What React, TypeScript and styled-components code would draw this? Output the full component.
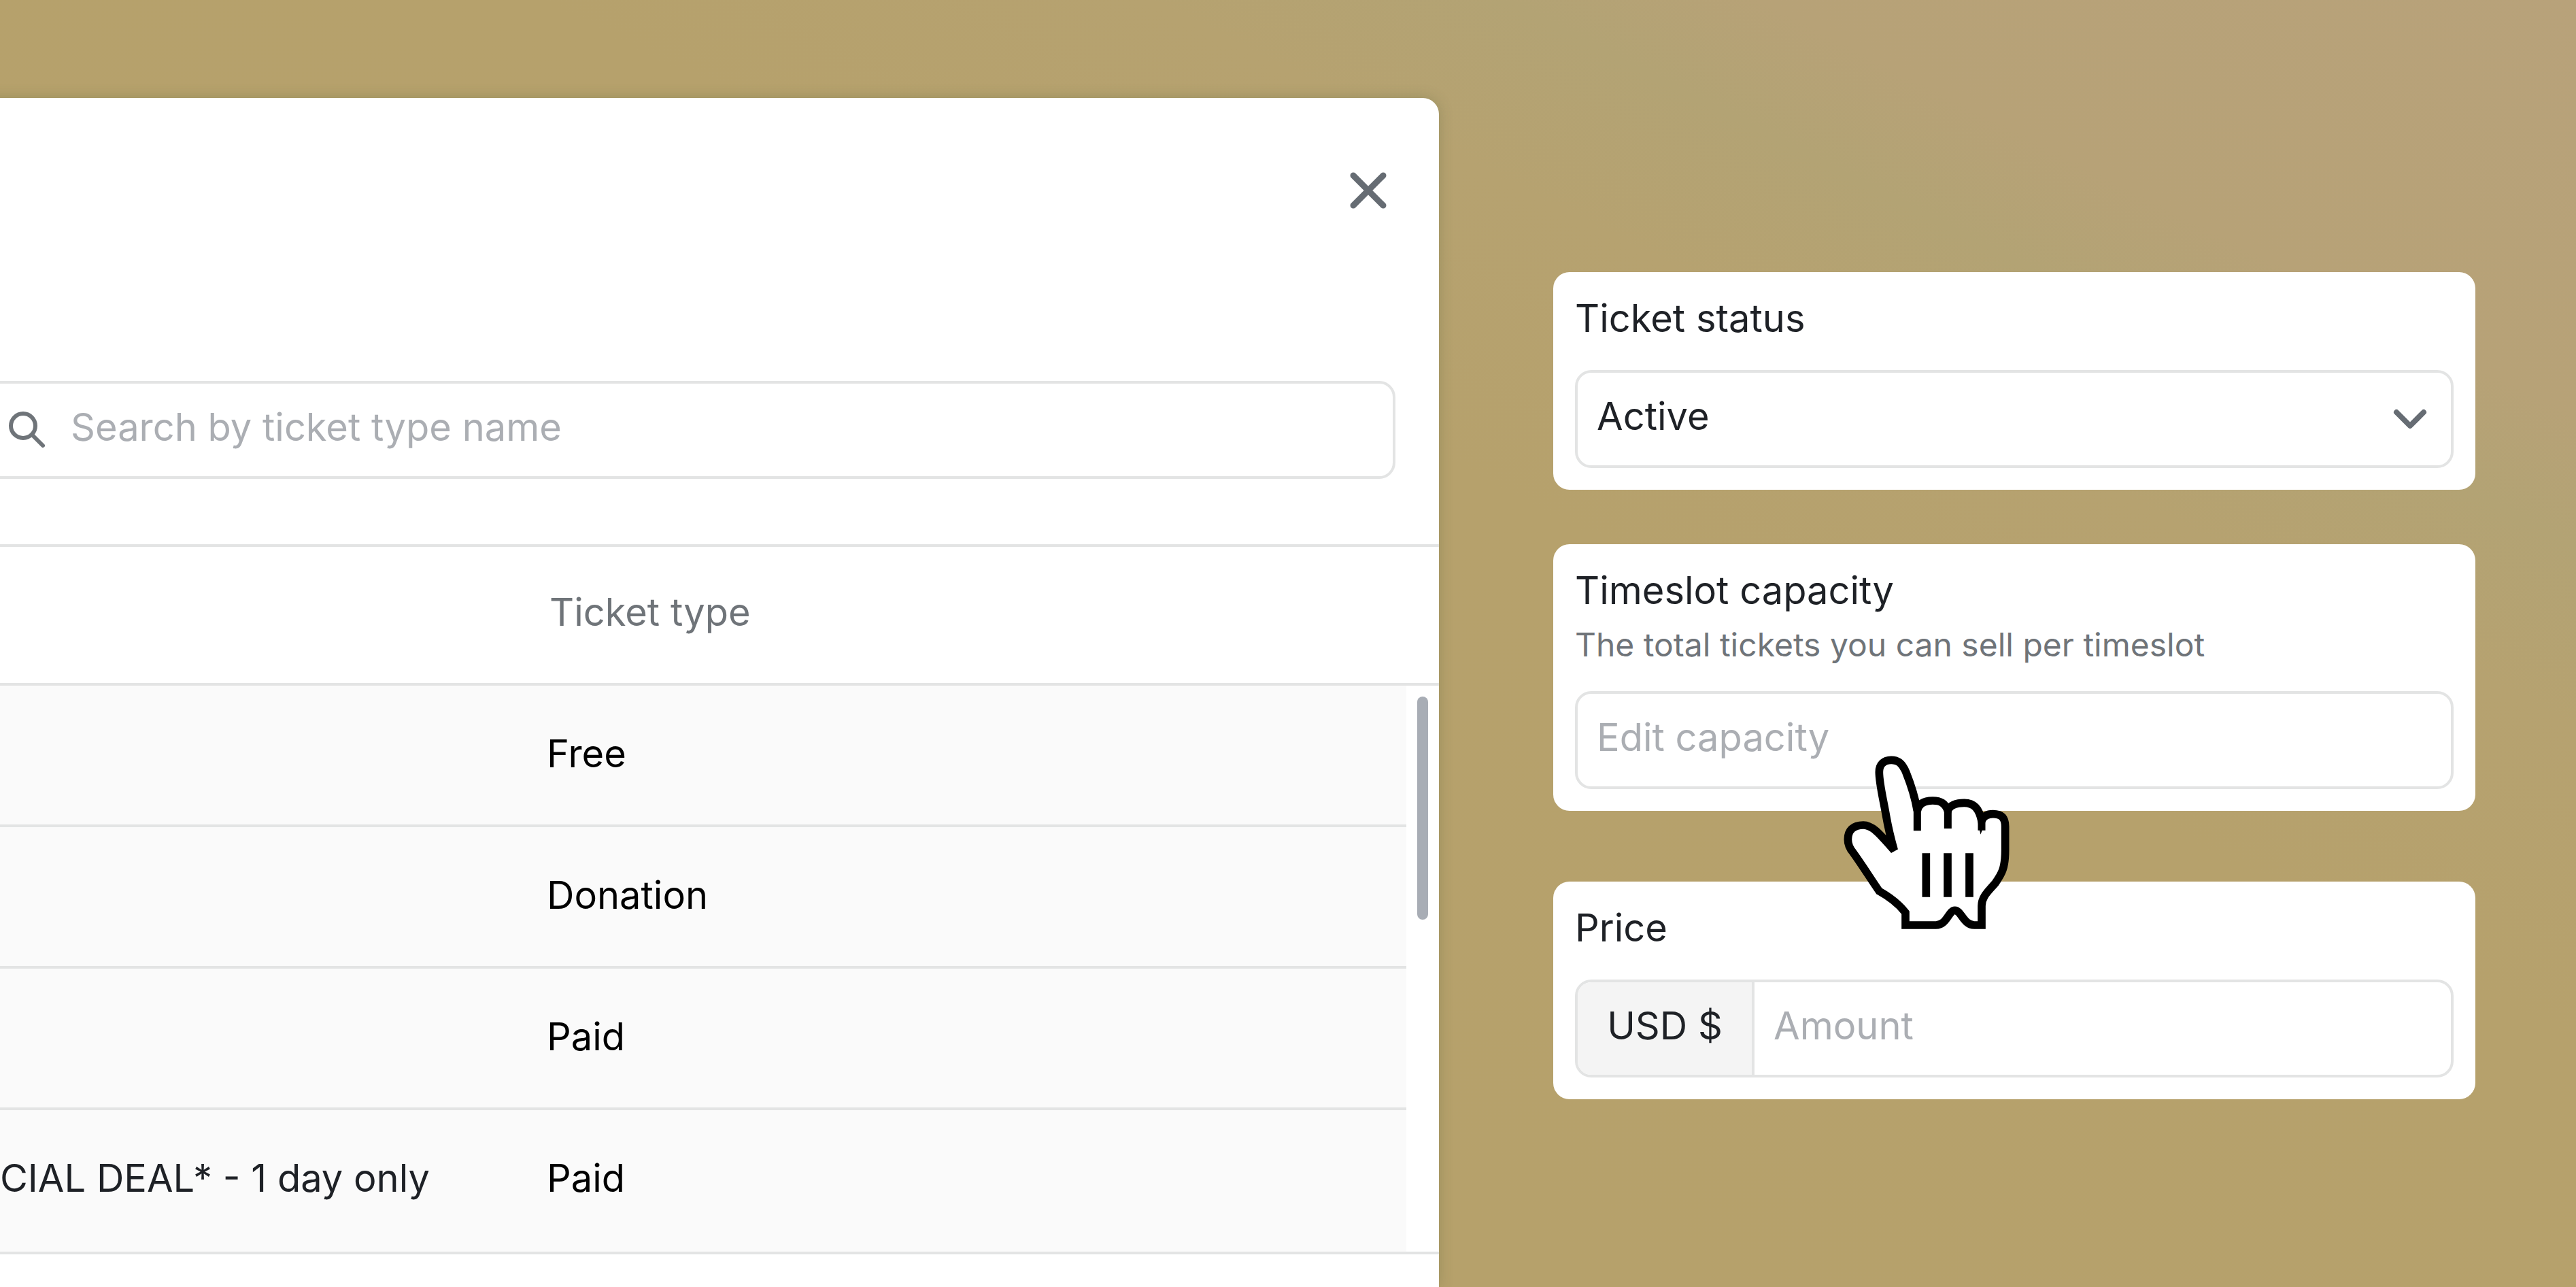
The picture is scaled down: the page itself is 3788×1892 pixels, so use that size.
import React from "react";
import styled, { createGlobalStyle } from "styled-components";

const ink = "#1e2126";
const muted = "#6f7479";
const faint = "#abaeb3";
const line = "#e3e4e4";

const GlobalStyle = createGlobalStyle`
  *, *::before, *::after { box-sizing: border-box; }
  body { margin: 0; }
  body, input, select, button {
    font-family: Inter, "Liberation Sans", sans-serif;
    font-size: 56px;
    line-height: 72px;
    font-weight: 400;
    color: ${ink};
  }
`;

const Page = styled.main`
  min-height: 100vh;
  display: grid;
  grid-template-columns: minmax(0, 529fr) minmax(0, 339fr);
  column-gap: 168px;
  padding-right: 148px;
  overflow: hidden;
  background: linear-gradient(27deg, #b6a16a 0%, #b6a16c 60%, #b6a270 72%, #b3a374 79%, #b7a277 84%, #b8a27a 100%);
`;

const Dialog = styled.section`
  margin: 144px 0 0 -640px;
  background: #fff;
  border-top-right-radius: 24px;
  box-shadow: 0 0 20px rgba(70, 90, 50, 0.26);
`;

const DialogHeader = styled.header`
  display: flex;
  justify-content: flex-end;
  padding: 96px 64px 240px;
`;

const CloseButton = styled.button`
  display: grid;
  place-items: center;
  width: 80px;
  height: 80px;
  padding: 0;
  border: 0;
  background: none;
`;

const SearchBar = styled.div`
  padding: 0 64px 96px 608px;
`;

const Field = styled.div`
  position: relative;
  display: flex;
  align-items: center;
  height: 144px;
  border: 4px solid ${line};
  border-radius: 24px;
  background: #fff;
  overflow: hidden;
`;

const SearchField = styled(Field)`
  gap: 32px;
  padding-left: 36px;
`;

const TextInput = styled.input<{ $inset?: number }>`
  flex: 1;
  min-width: 0;
  height: 100%;
  padding: 0 28px 8px ${(p) => p.$inset ?? 28}px;
  border: 0;
  outline: 0;
  background: none;
  &::placeholder {
    color: ${faint};
    opacity: 1;
  }
`;

const Select = styled.select`
  flex: 1;
  height: 100%;
  padding: 0 28px 8px;
  border: 0;
  outline: 0;
  background: none;
  appearance: none;
`;

const Chevron = styled.svg`
  position: absolute;
  right: 28px;
  width: 64px;
  height: 64px;
  pointer-events: none;
`;

const TableFrame = styled.div`
  border-top: 4px solid ${line};
  border-bottom: 4px solid ${line};
`;

const Table = styled.table`
  width: 100%;
  table-layout: fixed;
  border-collapse: separate;
  border-spacing: 0;
`;

const NameColumn = styled.col`
  width: 1444px;
`;

const GutterColumn = styled.col`
  width: 48px;
`;

const HeadCell = styled.th`
  height: 204px;
  padding: 0 0 8px 4px;
  border-bottom: 4px solid ${line};
  text-align: left;
  font-weight: 400;
  color: ${muted};
`;

const Cell = styled.td`
  height: 208px;
  padding: 0 0 4px;
  border-bottom: 4px solid ${line};
  background: #fafafa;
  color: #000;
  white-space: nowrap;
  tr:last-child > & {
    padding-bottom: 8px;
    border-bottom: 0;
  }
`;

const NameCell = styled(Cell)`
  padding-right: 172px;
  text-align: right;
  color: ${ink};
`;

const Gutter = styled.td`
  padding: 16px;
  vertical-align: top;
`;

const Thumb = styled.div`
  height: 328px;
  border-radius: 8px;
  background: #a8adb5;
`;

const Sidebar = styled.aside`
  display: flex;
  flex-direction: column;
  padding: 400px 0 80px;
`;

const Card = styled.section<{ $gap?: number }>`
  position: relative;
  margin-bottom: ${(p) => p.$gap ?? 80}px;
  padding: 32px;
  border-radius: 24px;
  background: #fff;
`;

const Label = styled.label`
  display: block;
`;

const Hint = styled.p`
  margin: 16px 0 0;
  font-size: 48px;
  line-height: 56px;
  color: ${muted};
`;

const CardField = styled(Field)`
  margin-top: 40px;
`;

const Prefix = styled.span`
  display: flex;
  align-items: center;
  justify-content: center;
  height: 100%;
  width: 260px;
  padding-bottom: 8px;
  border-right: 4px solid ${line};
  background: #f4f4f4;
`;

const Hand = styled.svg`
  position: absolute;
  z-index: 1;
  left: 396px;
  top: 280px;
  width: 310px;
  height: 310px;
  pointer-events: none;
`;

const rows = [
  { name: "", type: "Free" },
  { name: "", type: "Donation" },
  { name: "", type: "Paid" },
  { name: "*SPECIAL DEAL* - 1 day only", type: "Paid" },
];

function HandPointer() {
  return (
    <Hand viewBox="0 0 930 930" aria-hidden="true" fill="#fff" stroke="#000" strokeWidth="35">
      <path
        strokeLinejoin="miter"
        d="M316 510C296 440 288 400 281 360C268 285 250 215 250 165C250 130 272 112 303 112C335 112 352 128 368 165C390 220 408 275 418 335C425 302 452 291 486 291C522 291 541 303 553 335C560 312 590 301 625 301C668 301 690 325 702 380C711 357 730 350 752 350C790 350 806 368 806 405L806 510C806 590 790 615 762 655C730 692 702 715 702 755L702 840L670 840C622 840 612 775 584 775C556 775 550 840 500 840L366 840L366 785C335 745 295 715 250 690C215 640 175 575 135 520C118 500 112 480 112 462C112 422 135 399 180 399C225 399 262 450 316 510Z"
      />
      <path d="M418 300V424M553 320V414M702 372V422" strokeWidth="33" />
      <path d="M457 523V716M552 523V716M648 523V716" strokeWidth="35" />
    </Hand>
  );
}

export default function App() {
  return (
    <>
      <GlobalStyle />
      <Page>
        <Dialog role="dialog" aria-label="Ticket types">
          <DialogHeader>
            <CloseButton type="button" aria-label="Close">
              <svg width="54" height="54" viewBox="0 0 54 54" fill="none" stroke="#666c73" strokeWidth="9" strokeLinecap="round">
                <path d="M5 5L49 49M49 5L5 49" />
              </svg>
            </CloseButton>
          </DialogHeader>
          <SearchBar>
            <SearchField>
              <svg width="64" height="64" viewBox="0 0 64 64" fill="none" stroke={muted} strokeWidth="6" strokeLinecap="round">
                <circle cx="26" cy="26" r="18" />
                <path d="M39 39L55 55" />
              </svg>
              <TextInput $inset={0} type="search" aria-label="Search by ticket type name" placeholder="Search by ticket type name" />
            </SearchField>
          </SearchBar>
          <TableFrame>
            <Table>
              <colgroup>
                <NameColumn />
                <col />
                <GutterColumn />
              </colgroup>
              <thead>
                <tr>
                  <HeadCell />
                  <HeadCell scope="col">Ticket type</HeadCell>
                  <HeadCell />
                </tr>
              </thead>
              <tbody>
                {rows.map((row, i) => (
                  <tr key={i}>
                    <NameCell>{row.name}</NameCell>
                    <Cell>{row.type}</Cell>
                    {i === 0 && (
                      <Gutter rowSpan={rows.length}>
                        <Thumb />
                      </Gutter>
                    )}
                  </tr>
                ))}
              </tbody>
            </Table>
          </TableFrame>
        </Dialog>

        <Sidebar>
          <Card>
            <Label htmlFor="status">Ticket status</Label>
            <CardField>
              <Select id="status" defaultValue="Active">
                <option>Active</option>
                <option>Inactive</option>
              </Select>
              <Chevron viewBox="0 0 64 64" fill="none" stroke="#666c73" strokeWidth="8" strokeLinecap="round" strokeLinejoin="round">
                <path d="M12 22L32 42L52 22" />
              </Chevron>
            </CardField>
          </Card>

          <Card $gap={104}>
            <Label htmlFor="capacity">Timeslot capacity</Label>
            <Hint id="capacity-hint">The total tickets you can sell per timeslot</Hint>
            <CardField>
              <TextInput id="capacity" aria-describedby="capacity-hint" placeholder="Edit capacity" />
            </CardField>
            <HandPointer />
          </Card>

          <Card $gap={0}>
            <Label htmlFor="amount">Price</Label>
            <CardField>
              <Prefix>USD $</Prefix>
              <TextInput id="amount" inputMode="decimal" placeholder="Amount" />
            </CardField>
          </Card>
        </Sidebar>
      </Page>
    </>
  );
}
